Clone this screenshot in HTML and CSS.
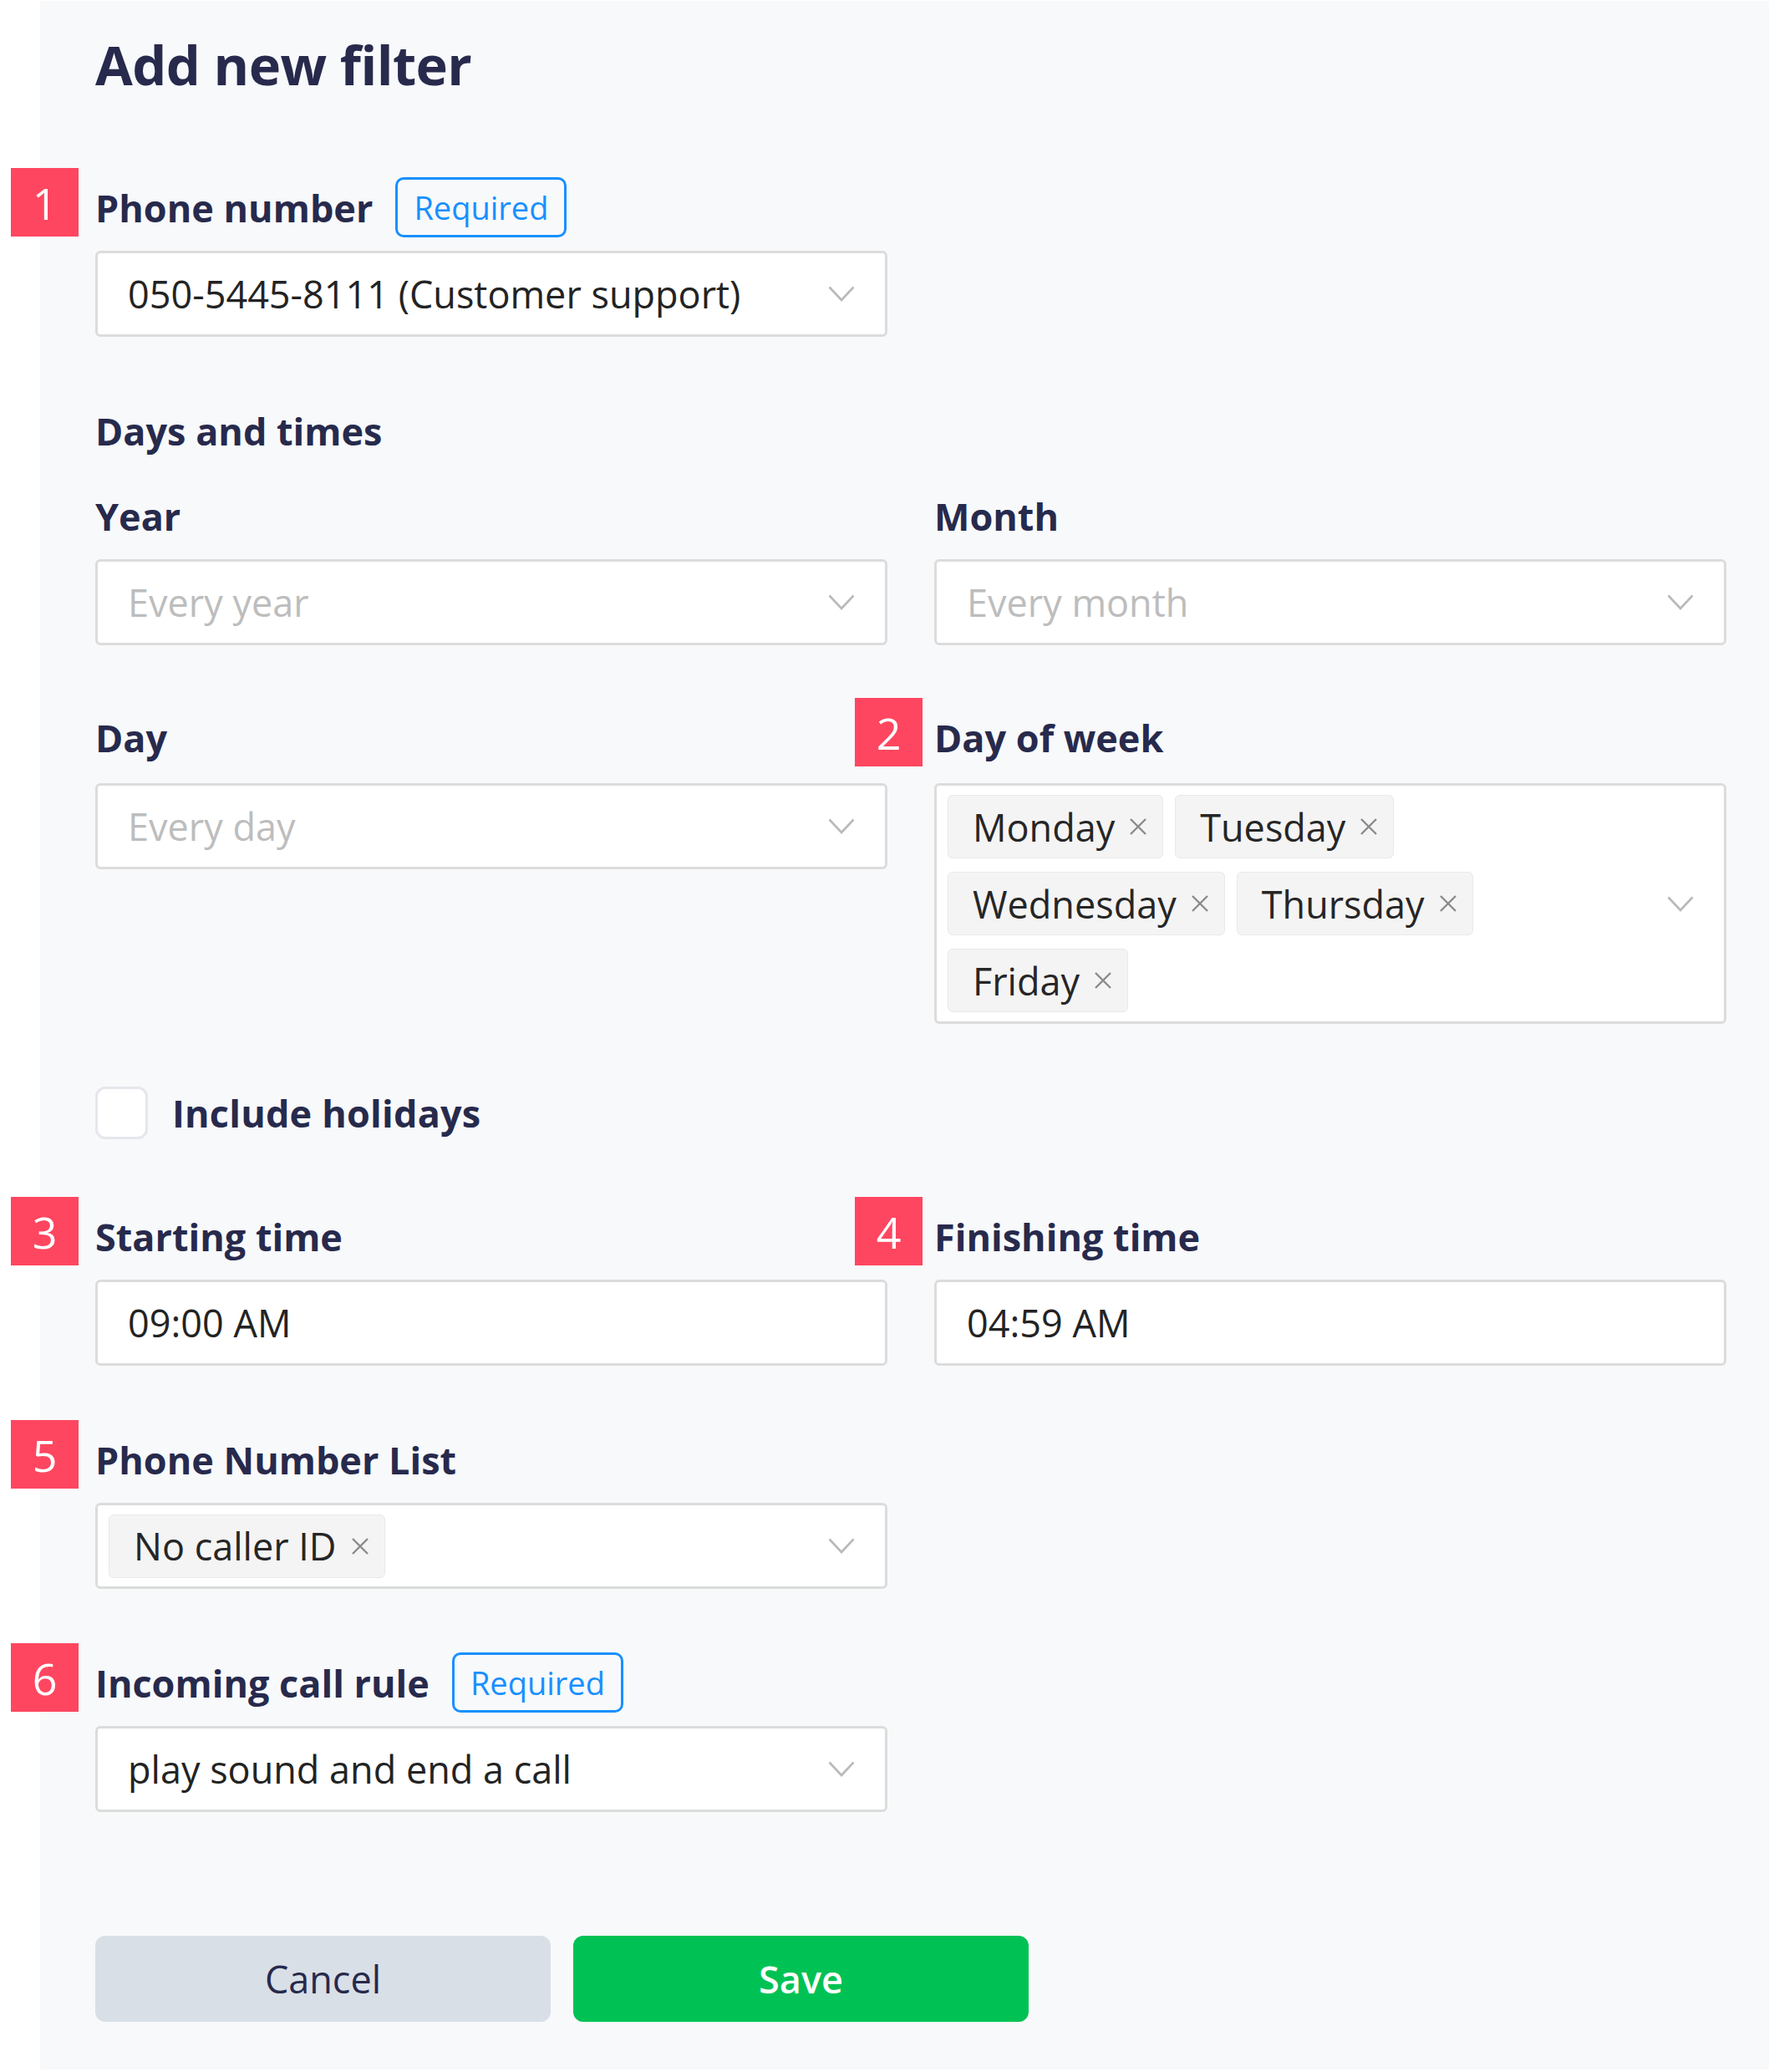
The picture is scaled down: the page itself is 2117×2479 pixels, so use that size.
FILE: index.html
```html
<!DOCTYPE html>
<html lang="en">
<head>
  <meta charset="UTF-8">
  <meta name="viewport" content="width=device-width, initial-scale=1.0">
  <title>Add new filter</title>
  <link rel="stylesheet" href="styles.css">
</head>
<body>

  <main class="panel">
    <h1 class="page-title">Add new filter</h1>

    <!-- Phone number -->
    <section class="field field-first">
      <div class="field-label">
        <span class="step">1</span>
        Phone number
        <span class="required">Required</span>
      </div>
      <div class="select">
        <span class="select-value">050-5445-8111 (Customer support)</span>
        <svg class="chevron" viewBox="0 0 32 19"><path d="M1.5 1.5 L16 17 L30.5 1.5"/></svg>
      </div>
    </section>

    <!-- Days and times -->
    <h2 class="group-title">Days and times</h2>
    <div class="two-col">
      <section class="field">
        <div class="field-label">Year</div>
        <div class="select">
          <span class="select-value placeholder">Every year</span>
          <svg class="chevron" viewBox="0 0 32 19"><path d="M1.5 1.5 L16 17 L30.5 1.5"/></svg>
        </div>
      </section>
      <section class="field">
        <div class="field-label">Month</div>
        <div class="select">
          <span class="select-value placeholder">Every month</span>
          <svg class="chevron" viewBox="0 0 32 19"><path d="M1.5 1.5 L16 17 L30.5 1.5"/></svg>
        </div>
      </section>
      <section class="field">
        <div class="field-label">Day</div>
        <div class="select">
          <span class="select-value placeholder">Every day</span>
          <svg class="chevron" viewBox="0 0 32 19"><path d="M1.5 1.5 L16 17 L30.5 1.5"/></svg>
        </div>
      </section>
      <section class="field">
        <div class="field-label">
          <span class="step step-right">2</span>
          Day of week
        </div>
        <div class="select select-multi">
          <div class="tags">
            <span class="tag">Monday<svg class="tag-close" viewBox="0 0 22 24"><path d="M2 3 L20 21 M20 3 L2 21"/></svg></span>
            <span class="tag">Tuesday<svg class="tag-close" viewBox="0 0 22 24"><path d="M2 3 L20 21 M20 3 L2 21"/></svg></span>
            <span class="tag">Wednesday<svg class="tag-close" viewBox="0 0 22 24"><path d="M2 3 L20 21 M20 3 L2 21"/></svg></span>
            <span class="tag">Thursday<svg class="tag-close" viewBox="0 0 22 24"><path d="M2 3 L20 21 M20 3 L2 21"/></svg></span>
            <span class="tag">Friday<svg class="tag-close" viewBox="0 0 22 24"><path d="M2 3 L20 21 M20 3 L2 21"/></svg></span>
          </div>
          <svg class="chevron" viewBox="0 0 32 19"><path d="M1.5 1.5 L16 17 L30.5 1.5"/></svg>
        </div>
      </section>
    </div>

    <label class="checkbox-row">
      <span class="checkbox"></span>
      Include holidays
    </label>

    <!-- Times -->
    <div class="two-col two-col-times">
      <section class="field">
        <div class="field-label">
          <span class="step">3</span>
          Starting time
        </div>
        <div class="select"><span class="select-value">09:00 AM</span></div>
      </section>
      <section class="field">
        <div class="field-label">
          <span class="step step-right">4</span>
          Finishing time
        </div>
        <div class="select"><span class="select-value">04:59 AM</span></div>
      </section>
    </div>

    <section class="field field-spaced">
      <div class="field-label">
        <span class="step">5</span>
        Phone Number List
      </div>
      <div class="select select-tagged">
        <div class="tags">
          <span class="tag">No caller ID<svg class="tag-close" viewBox="0 0 22 24"><path d="M2 3 L20 21 M20 3 L2 21"/></svg></span>
        </div>
        <svg class="chevron" viewBox="0 0 32 19"><path d="M1.5 1.5 L16 17 L30.5 1.5"/></svg>
      </div>
    </section>

    <section class="field field-spaced">
      <div class="field-label">
        <span class="step">6</span>
        Incoming call rule
        <span class="required">Required</span>
      </div>
      <div class="select">
        <span class="select-value">play sound and end a call</span>
        <svg class="chevron" viewBox="0 0 32 19"><path d="M1.5 1.5 L16 17 L30.5 1.5"/></svg>
      </div>
    </section>

    <div class="actions">
      <button class="btn btn-cancel" type="button">Cancel</button>
      <button class="btn btn-save" type="button">Save</button>
    </div>
  </main>

</body>
</html>
```

FILE: styles.css
```css
:root {
  --navy: #272a4c;
  --ink: #232323;
  --muted: #bdbdbd;
  --line: #dcdcdc;
  --accent: #1890ff;
  --step: #ff4660;
  --panel: #f8f9fb;
  --col: 948px;
}

body {
  margin: 0;
  background: #fff;
  font-family: "Open Sans", "Noto Sans", sans-serif;
  color: var(--navy);
}

.panel {
  margin: 1px 0 3px 48px;
  padding: 37px 50px 57px 66px;
  background: var(--panel);
  display: flex;
  flex-direction: column;
  align-items: flex-start;
}

.page-title {
  margin: 0;
  font-size: 65px;
  line-height: 1.2;
  font-weight: 700;
  letter-spacing: -0.6px;
}

/* Fields */
.field {
  position: relative;
  width: var(--col);
}

.field-first {
  margin-top: 96px;
}

.field-spaced {
  margin-top: 76px;
}

.field-label,
.group-title {
  position: relative;
  display: flex;
  align-items: center;
  height: 72px;
  font-size: 45px;
  font-weight: 700;
  white-space: nowrap;
}

.group-title {
  margin: 76px 0 30px;
}

.required {
  margin-left: 27px;
  height: 72px;
  box-sizing: border-box;
  display: inline-flex;
  align-items: center;
  padding: 0 19px;
  border: 3px solid var(--accent);
  border-radius: 10px;
  color: var(--accent);
  font-size: 38px;
  font-weight: 400;
}

.step {
  position: absolute;
  left: -101px;
  top: -11px;
  width: 81px;
  height: 82px;
  display: flex;
  align-items: center;
  justify-content: center;
  background: var(--step);
  color: #fff;
  font-size: 52px;
  font-weight: 400;
}

.step-right {
  left: -95px;
}

/* Select boxes */
.select {
  margin-top: 16px;
  box-sizing: border-box;
  height: 103px;
  display: flex;
  align-items: center;
  justify-content: space-between;
  padding: 0 36px 0 36px;
  background: #fff;
  border: 3px solid var(--line);
  border-radius: 6px;
  font-size: 45px;
  color: var(--ink);
}

.placeholder {
  color: var(--muted);
}

.chevron {
  flex: none;
  width: 32px;
  height: 19px;
  fill: none;
  stroke: #b9b9b9;
  stroke-width: 2.6;
}

.two-col .field:nth-child(n+3) .select {
  margin-top: 19px;
}

.select-multi {
  height: auto;
  padding: 11px 36px 11px 13px;
}

.select-multi .tags {
  margin-right: 40px;
}

.select-tagged {
  padding-left: 13px;
}

.tags {
  flex: 1;
  display: flex;
  flex-wrap: wrap;
  gap: 16px 14px;
}

.tag {
  box-sizing: border-box;
  height: 76px;
  display: inline-flex;
  align-items: center;
  gap: 17px;
  padding: 0 18px 0 29px;
  background: #f4f4f4;
  border: 1.5px solid #e9e9e9;
  border-radius: 6px;
  color: #262626;
}

.tag-close {
  width: 22px;
  height: 24px;
  fill: none;
  stroke: #8a8a8a;
  stroke-width: 2.4;
}

/* Two column grid */
.two-col {
  display: grid;
  grid-template-columns: var(--col) var(--col);
  column-gap: 56px;
  row-gap: 74px;
  align-items: start;
}

.two-col-times {
  margin-top: 80px;
}

/* Checkbox */
.checkbox-row {
  margin-top: 75px;
  display: flex;
  align-items: center;
  gap: 29px;
  height: 63px;
  font-size: 45px;
  font-weight: 700;
  letter-spacing: 0.2px;
}

.checkbox {
  width: 63px;
  height: 63px;
  box-sizing: border-box;
  background: #fff;
  border: 3px solid #e5e7ec;
  border-radius: 12px;
}

/* Buttons */
.actions {
  margin-top: 148px;
  display: flex;
  gap: 27px;
}

.btn {
  width: 545px;
  height: 103px;
  border: none;
  border-radius: 12px;
  font-family: inherit;
  font-size: 45px;
  cursor: pointer;
}

.btn-cancel {
  background: #d9dfe7;
  color: var(--navy);
}

.btn-save {
  background: #00c254;
  color: #fff;
  font-weight: 600;
}
```
